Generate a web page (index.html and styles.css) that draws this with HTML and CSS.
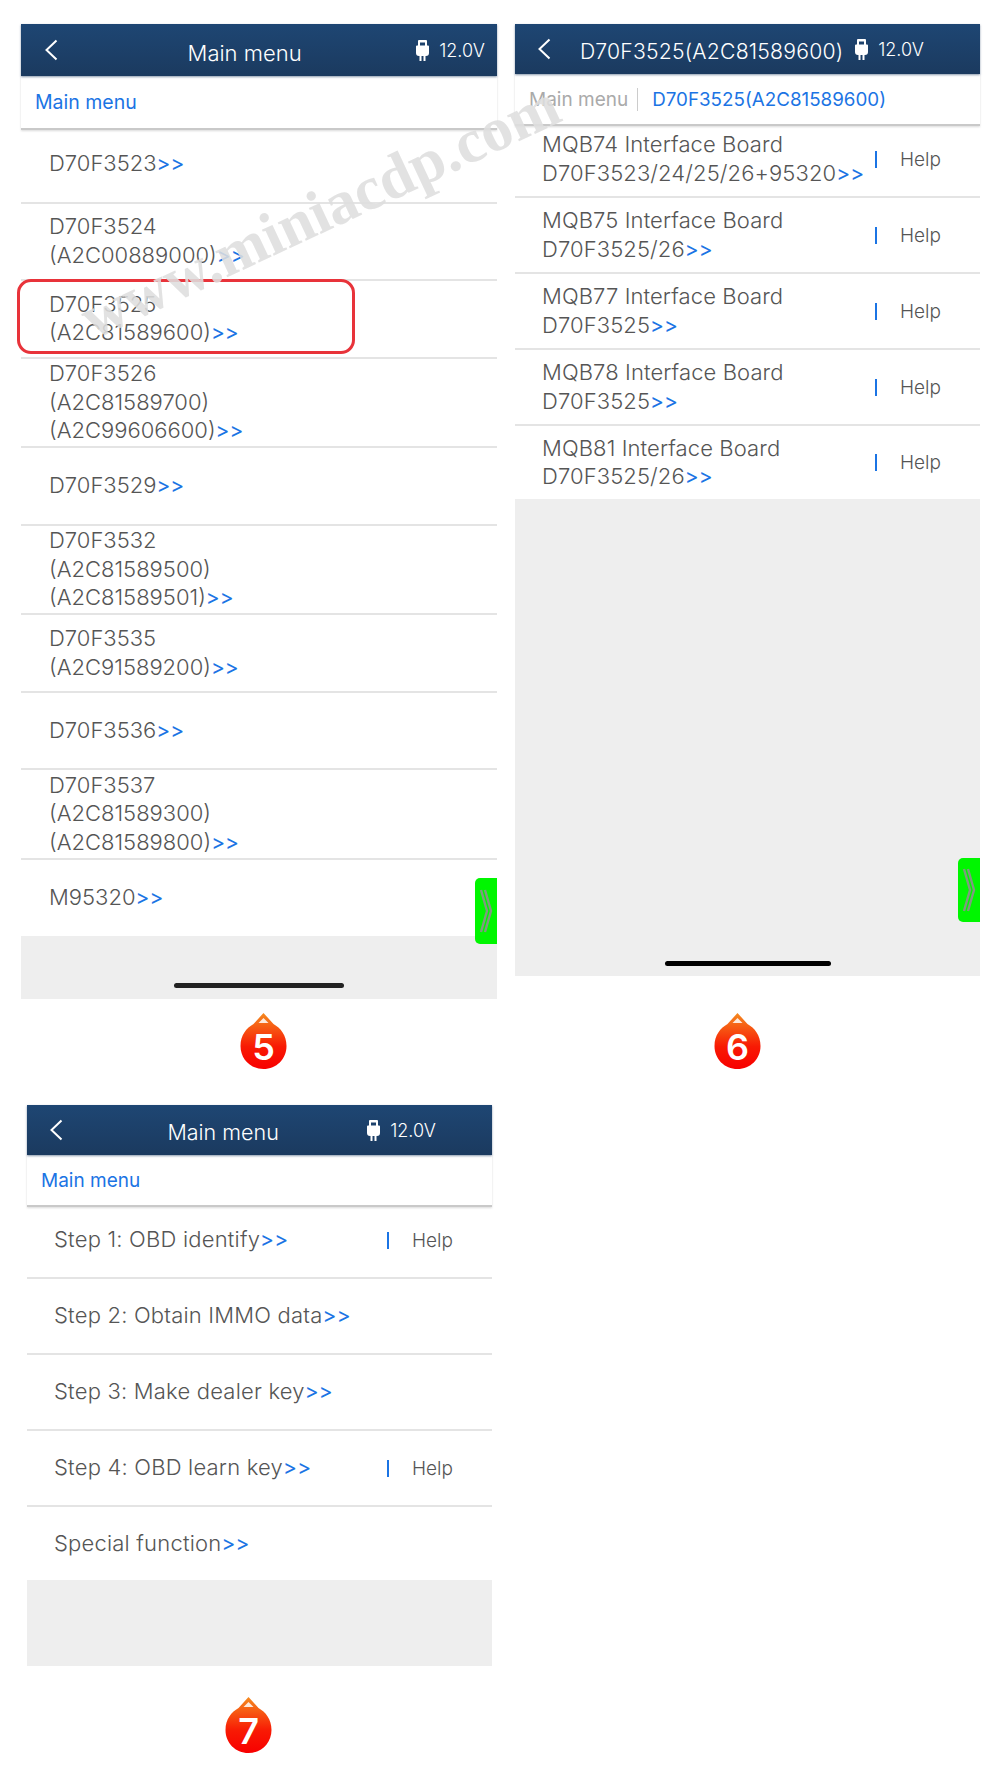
FILE: index.html
```html
<!DOCTYPE html>
<html lang="en">
<head>
  <meta charset="UTF-8" />
  <title>D70F3525 menu steps</title>
  <link rel="stylesheet" href="styles.css">
</head>
<body>
  <svg width="0" height="0" class="defs">
    <defs>
      <linearGradient id="dropfill" x1="0" y1="0" x2="0" y2="1">
        <stop offset="0" stop-color="#f58a1f"/>
        <stop offset="0.6" stop-color="#f81a04"/>
        <stop offset="1" stop-color="#f80000"/>
      </linearGradient>
      <symbol id="back" viewBox="0 0 14 22">
        <path d="M12.5 1.5 L2.5 11 L12.5 20.5" fill="none" stroke="#fff" stroke-width="2"/>
      </symbol>
      <symbol id="plug" viewBox="0 0 13 21">
        <path d="M3 0h7a1 1 0 0 1 1 1v4.500h1a1 1 0 0 1 1 1V13a3 3 0 0 1-3 3H9.500v5H7.500v-5h-2v5h-2v-5H3a3 3 0 0 1-3-3V6.500a1 1 0 0 1 1-1h1V1a1 1 0 0 1 1-1zM4 2.500v3h5v-3z" fill="#fff" fill-rule="evenodd"/>
      </symbol>
      <symbol id="chev" viewBox="0 0 14 44">
        <path d="M2 1 L8 22 L2 43 M6 1 L12 22 L6 43" fill="none" stroke="#7f9a7f" stroke-width="2.400"/>
      </symbol>
      <symbol id="drop" viewBox="0 0 46 56">
        <path d="M23 0 L33 11 C40 15 46 22 46 33 C46 46 36 56 23 56 C10 56 0 46 0 33 C0 22 6 15 13 11 Z" fill="url(#dropfill)"/>
        <path d="M23 5 L28 10 H18 Z" fill="#fff" opacity="0.85"/>
      </symbol>
    </defs>
  </svg>

  <div class="top-row">
    <div class="col col-five">
      <section class="screen screen-five">
        <header class="bar">
          <svg class="back"><use href="#back"/></svg>
          <div class="title">Main menu</div>
          <svg class="plug"><use href="#plug"/></svg>
          <div class="volt">12.0V</div>
        </header>
        <div class="crumbs"><span class="crumb on">Main menu</span></div>
        <ul class="list">
          <li class="row"><div class="name">D70F3523<span class="more">&gt;&gt;</span></div></li>
          <li class="row"><div class="name">D70F3524<br>(A2C00889000)<span class="more">&gt;&gt;</span></div></li>
          <li class="row"><div class="name">D70F3525<br>(A2C81589600)<span class="more">&gt;&gt;</span></div></li>
          <li class="row"><div class="name">D70F3526<br>(A2C81589700)<br>(A2C99606600)<span class="more">&gt;&gt;</span></div></li>
          <li class="row"><div class="name">D70F3529<span class="more">&gt;&gt;</span></div></li>
          <li class="row"><div class="name">D70F3532<br>(A2C81589500)<br>(A2C81589501)<span class="more">&gt;&gt;</span></div></li>
          <li class="row"><div class="name">D70F3535<br>(A2C91589200)<span class="more">&gt;&gt;</span></div></li>
          <li class="row"><div class="name">D70F3536<span class="more">&gt;&gt;</span></div></li>
          <li class="row"><div class="name">D70F3537<br>(A2C81589300)<br>(A2C81589800)<span class="more">&gt;&gt;</span></div></li>
          <li class="row"><div class="name">M95320<span class="more">&gt;&gt;</span></div></li>
        </ul>
        <div class="fill"><div class="home"></div></div>
        <div class="drawer"><svg class="chev"><use href="#chev"/></svg></div>
      </section>
      <div class="badge"><svg class="drop"><use href="#drop"/></svg><span class="num">5</span></div>
    </div>

    <div class="col col-six">
      <section class="screen screen-six">
        <header class="bar">
          <svg class="back"><use href="#back"/></svg>
          <div class="title">D70F3525(A2C81589600)</div>
          <svg class="plug"><use href="#plug"/></svg>
          <div class="volt">12.0V</div>
        </header>
        <div class="crumbs"><span class="crumb">Main menu</span><span class="crumb on">D70F3525(A2C81589600)</span></div>
        <ul class="list">
          <li class="row"><div class="name">MQB74 Interface Board<br>D70F3523/24/25/26+95320<span class="more">&gt;&gt;</span></div><div class="help">Help</div></li>
          <li class="row"><div class="name">MQB75 Interface Board<br>D70F3525/26<span class="more">&gt;&gt;</span></div><div class="help">Help</div></li>
          <li class="row"><div class="name">MQB77 Interface Board<br>D70F3525<span class="more">&gt;&gt;</span></div><div class="help">Help</div></li>
          <li class="row"><div class="name">MQB78 Interface Board<br>D70F3525<span class="more">&gt;&gt;</span></div><div class="help">Help</div></li>
          <li class="row"><div class="name">MQB81 Interface Board<br>D70F3525/26<span class="more">&gt;&gt;</span></div><div class="help">Help</div></li>
        </ul>
        <div class="fill"><div class="home"></div></div>
        <div class="drawer"><svg class="chev"><use href="#chev"/></svg></div>
      </section>
      <div class="badge"><svg class="drop"><use href="#drop"/></svg><span class="num">6</span></div>
    </div>
  </div>

  <div class="col col-seven">
    <section class="screen screen-seven">
      <header class="bar">
        <svg class="back"><use href="#back"/></svg>
        <div class="title">Main menu</div>
        <svg class="plug"><use href="#plug"/></svg>
        <div class="volt">12.0V</div>
      </header>
      <div class="crumbs"><span class="crumb on">Main menu</span></div>
      <ul class="list">
        <li class="row"><div class="name">Step 1: OBD identify<span class="more">&gt;&gt;</span></div><div class="help">Help</div></li>
        <li class="row"><div class="name">Step 2: Obtain IMMO data<span class="more">&gt;&gt;</span></div></li>
        <li class="row"><div class="name">Step 3: Make dealer key<span class="more">&gt;&gt;</span></div></li>
        <li class="row"><div class="name">Step 4: OBD learn key<span class="more">&gt;&gt;</span></div><div class="help">Help</div></li>
        <li class="row"><div class="name">Special function<span class="more">&gt;&gt;</span></div></li>
      </ul>
      <div class="fill"></div>
    </section>
    <div class="badge"><svg class="drop"><use href="#drop"/></svg><span class="num">7</span></div>
  </div>

  <div class="callout"></div>
  <div class="watermark">www.miniacdp.com</div>
</body>
</html>
```

FILE: styles.css
```css
* {
  margin: 0;
  padding: 0;
  box-sizing: border-box;
}

body {
  position: relative;
  width: 1000px;
  height: 1786px;
  overflow: hidden;
  background: #fff;
  color: #555;
  font-family: Inter, "Liberation Sans", sans-serif;
}

.defs {
  position: absolute;
}

.top-row {
  display: flex;
  align-items: flex-start;
  padding: 24px 0 0 21px;
  height: 1105px;
}

.col-five {
  width: 476px;
}

.col-six {
  width: 465px;
  margin-left: 18px;
}

.col-seven {
  width: 465px;
  margin-left: 27px;
}

.screen {
  position: relative;
  display: flex;
  flex-direction: column;
  background: #eee;
}

.screen-five {
  height: 975px;
}

.screen-six {
  height: 952px;
}

.screen-seven {
  height: 561px;
}

.bar {
  display: flex;
  align-items: center;
  height: 50px;
  padding: 0 56px 0 22px;
  background: linear-gradient(#1e4673, #1b3a5f);
  box-shadow: 0 1px 2px rgba(20, 50, 90, 0.5);
  color: #fff;
  z-index: 2;
}

.screen-five .bar {
  height: 52px;
  padding: 0 12px 0 23px;
}

.back {
  width: 14px;
  height: 22px;
  flex-shrink: 0;
}

.title {
  flex: 1;
  padding: 3px 0 0 14px;
  text-align: center;
  font-size: 22px;
  font-weight: 300;
}

.screen-five .title {
  padding: 5px 0 0 15px;
}

.screen-six .title {
  padding-left: 17px;
  font-size: 21.200px;
  letter-spacing: 0.2px;
}

.screen-seven .title {
  padding-left: 16px;
  font-size: 21.500px;
}

.plug {
  width: 13px;
  height: 21px;
  margin-top: 1px;
  flex-shrink: 0;
}

.volt {
  margin-left: 10px;
  padding-top: 1px;
  font-size: 18px;
  font-weight: 300;
}

.crumbs {
  position: relative;
  display: flex;
  align-items: center;
  height: 52px;
  padding: 1px 0 0 14px;
  background: #fff;
  border-bottom: 2px solid #c9c9c9;
  box-shadow: 0 1px 2px rgba(0, 0, 0, 0.15);
  z-index: 1;
}

.screen-five .crumbs {
  height: 54px;
  padding: 0 0 1px 14px;
}

.crumb {
  font-size: 19px;
  color: #aaa;
}

.screen-five .crumb {
  font-size: 19.500px;
}

.crumb + .crumb {
  margin-left: 9px;
  padding-left: 14px;
  font-size: 18.800px;
  border-left: 1px solid #ccc;
}

.crumb.on {
  color: #1b74e4;
}

.list {
  list-style: none;
  margin-top: -4px;
  background: #fff;
}

.row {
  display: flex;
  align-items: center;
  min-height: 76px;
  padding-left: 27px;
  border-bottom: 2px solid #e4e4e4;
}

.screen-five .row {
  min-height: 77.500px;
  padding: 0.600px 0 0.600px 28px;
}

.row:last-child {
  min-height: 73px;
  border-bottom: 0;
}

.screen-five .row:last-child {
  min-height: 76px;
  border-bottom: 0;
}

.name {
  flex: 1;
  font-size: 22px;
  font-weight: 300;
  line-height: 28.500px;
}

.screen-six .name {
  letter-spacing: 0.1px;
}

.screen-seven .name {
  letter-spacing: 0.2px;
}

.more {
  color: #1b74e4;
  font-size: 21px;
  font-weight: 400;
}

.help {
  position: relative;
  width: 77px;
  padding-left: 25px;
  margin-right: 28px;
  font-size: 19px;
  font-weight: 300;
}

.help::before {
  content: "";
  position: absolute;
  left: 0;
  top: 3px;
  bottom: 3px;
  width: 1.500px;
  background: #1b74e4;
}

.fill {
  flex: 1;
  position: relative;
  background: #eee;
}

.home {
  position: absolute;
  left: 50%;
  bottom: 11px;
  width: 170px;
  height: 5px;
  margin-left: -85px;
  border-radius: 3px;
  background: #222;
}

.screen-six .home {
  bottom: 10px;
  width: 166px;
  margin-left: -83px;
  background: #000;
}

.drawer {
  position: absolute;
  right: 0;
  top: 854px;
  display: flex;
  align-items: center;
  justify-content: center;
  width: 22px;
  height: 66px;
  border-radius: 5px 0 0 5px;
  background: #00f600;
  z-index: 3;
}

.screen-six .drawer {
  top: 834px;
  height: 64px;
}

.chev {
  width: 14px;
  height: 44px;
}

.badge {
  position: relative;
  width: 47px;
  height: 56px;
  margin: 14px 0 0 219px;
}

.col-six .badge {
  margin: 37px 0 0 199px;
}

.col-seven .badge {
  margin: 31px 0 0 198px;
}

.drop {
  display: block;
  width: 47px;
  height: 56px;
}

.num {
  position: absolute;
  left: 0;
  right: 0;
  top: 12px;
  text-align: center;
  font-size: 36px;
  line-height: 44px;
  font-weight: 600;
  color: #fff;
}

.callout {
  position: absolute;
  left: 17px;
  top: 279px;
  width: 338px;
  height: 75px;
  border: 3px solid #e8333a;
  border-radius: 14px;
  z-index: 5;
}

.watermark {
  position: absolute;
  left: 60px;
  top: 176px;
  font-family: "Liberation Serif", serif;
  font-size: 62px;
  font-weight: 700;
  color: rgba(222, 222, 222, 0.88);
  transform: rotate(-25deg);
  white-space: nowrap;
  z-index: 6;
}
```
